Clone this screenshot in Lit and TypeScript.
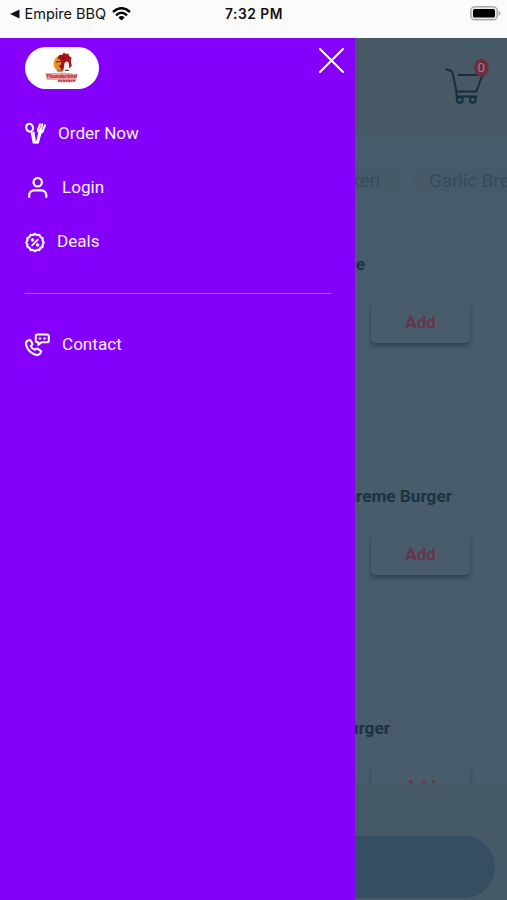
import { LitElement, html, css, svg } from "lit";
import { customElement, property } from "lit/decorators.js";

const icons = {
  order: svg`<g fill="none" stroke="#fff" stroke-linecap="round" stroke-linejoin="round">
    <ellipse cx="4.6" cy="4.7" rx="3.4" ry="3.9" stroke-width="2.1" transform="rotate(-20 4.6 4.7)"/>
    <path d="M6.4 8.8L8.6 19.8M8.6 9.4L10.2 19.8" stroke-width="1.8"/>
    <path d="M14.9 1.2L13.3 6.2M17.3 1.3L15.8 6.8M20 2.3L18.2 7" stroke-width="2"/>
    <path d="M13 6Q12.5 9.2 14.4 9.6L11.7 19.8M18.4 7Q17.6 9.8 15.7 9.8L13 19.8" stroke-width="1.8"/>
    <path d="M13.5 6.5L17.8 7.6L15 9.3Z" fill="#fff"/></g>`,
  login: svg`<g fill="none" stroke="#fff" stroke-width="2.2" stroke-linecap="round">
    <circle cx="9.7" cy="5.2" r="4.2"/><path d="M1.2 20v-1.8a4.9 4.9 0 0 1 4.9-4.9h7.3a4.9 4.9 0 0 1 4.9 4.9V20"/></g>`,
  deals: svg`<g fill="none" stroke="#fff" stroke-linecap="round" stroke-linejoin="round" transform="translate(0 1.5)">
    <path stroke-width="2.2" d="M10 1.2Q11.7 3 14.3 2.3Q15 4.9 17.6 5.6Q17 8.3 18.8 10Q17 11.8 17.6 14.4Q15 15 14.3 17.6Q11.7 17 10 18.8Q8.3 17 5.7 17.6Q5 15 2.4 14.4Q3 11.8 1.2 10Q3 8.3 2.4 5.6Q5 4.9 5.7 2.3Q8.3 3 10 1.2Z"/>
    <path stroke-width="1.8" d="M12.9 7.2L7.1 12.8"/><circle cx="7.5" cy="7.5" r="1" stroke-width="1.5"/><circle cx="12.6" cy="12.6" r="1" stroke-width="1.5"/></g>`,
  contact: svg`<g fill="none" stroke="#fff" stroke-linecap="round" stroke-linejoin="round" transform="translate(0 .5)">
    <path stroke-width="2.1" d="M2.2 7.4L4.1 6.6Q5.2 6.2 5.8 7.3L7.3 9.9Q7.8 11 6.7 11.7L5.8 12.5Q6.7 15.2 10 16.3L11.1 15.4Q11.9 14.7 12.9 15.4L15.6 17.4Q16.6 18.2 15.8 19.2L14.5 20.6Q12.8 22.2 10 21.1Q3.3 18.4 1.2 11.7Q.4 8.8 2.2 7.4Z"/>
    <path stroke-width="2" d="M12 1.1h10.2q1.6 0 1.6 1.6v4.5q0 1.6-1.6 1.6h-5.6L13.3 11.4V8.8H12q-1.2 0-1.2-1.6V2.7q0-1.6 1.2-1.6Z"/>
    <path stroke-width="2.1" d="M14.6 5h.6M19.3 5h.6"/></g>`,
};

const entries = [
  { label: "Order Now", icon: icons.order, w: 21, h: 21, gap: 12 },
  { label: "Login", icon: icons.login, w: 20, h: 21, gap: 14.5, indent: 2.5 },
  { label: "Deals", icon: icons.deals, w: 20, h: 20, gap: 12 },
];
const contact = { label: "Contact", icon: icons.contact, w: 25, h: 23, gap: 12 };

@customElement("status-bar")
export class StatusBar extends LitElement {
  static styles = css`
    :host { display: grid; grid-template-columns: 1fr auto 1fr; align-items: center; height: 38px; padding: 0 6px 10px 7px; box-sizing: border-box; background: #fbfbfb; color: #111; font: 14.5px Inter, sans-serif; }
    .back { display: flex; align-items: center; margin: -1px 0 0 2.5px; }
    .arrow { margin-right: 5px; }
    .wifi { margin: 0 0 0 6px; }
    .time { font-weight: 600; font-size: 13.8px; letter-spacing: 0.5px; }
    .battery { justify-self: end; margin-top: -1px; }
  `;
  render() {
    return html`
      <div class="back">
        <svg class="arrow" width="10" height="10" viewBox="0 0 10 10"><path d="M0 5L9.5 .6V9.4Z" fill="#111"/></svg>
        <span>Empire BBQ</span>
        <svg class="wifi" width="19" height="14" viewBox="0 0 19 14"><g fill="none" stroke="#080808" stroke-width="2.5"><path d="M1 5Q9.5-2.6 18 5"/><path d="M4 8.3Q9.5 3.3 15 8.3"/></g><path d="M6.4 10.4Q9.5 7.7 12.6 10.4L9.5 13.6Z"/></svg>
      </div>
      <div class="time">7:32 PM</div>
      <svg class="battery" width="31" height="15" viewBox="0 0 31 15"><rect x=".8" y=".8" width="26.4" height="13" rx="4" fill="#ececec" stroke="#aaa" stroke-width="1.5"/><rect x="3" y="3" width="22" height="8.6" rx="1.7"/><path d="M28.5 5Q30.5 5.7 30.5 7.4Q30.5 9 28.5 9.8Z" fill="#aaa"/></svg>`;
  }
}

@customElement("menu-entry")
export class MenuEntry extends LitElement {
  @property({ attribute: false }) entry: any = contact;
  static styles = css`
    :host { display: flex; align-items: center; height: 54px; color: #f8eeff; font: 17.1px Roboto, sans-serif; }
    svg { display: block; flex: none; overflow: visible; }
  `;
  render() {
    const e = this.entry;
    return html`<svg width=${e.w} height=${e.h} viewBox="0 0 ${e.w} ${e.h}" style="margin-left:${e.indent ?? 0}px;margin-right:${e.gap}px">${e.icon}</svg><span>${e.label}</span>`;
  }
}

@customElement("side-drawer")
export class SideDrawer extends LitElement {
  static styles = css`
    :host { display: block; box-sizing: border-box; padding: 9px 10px 0 25px; background: #8500fb; }
    .top { display: flex; justify-content: space-between; height: 59px; }
    .logo { display: flex; align-items: center; justify-content: center; width: 74px; height: 42px; border-radius: 21px; background: #fff; }
    .rule { height: 1px; margin: 25px 14px 23px 0; background: #b55cff; }
    svg { display: block; }
  `;
  render() {
    return html`
      <div class="top">
        <div class="logo">
          <svg width="34" height="32" viewBox="0 0 34 32">
            <circle cx="16.6" cy="11.5" r="8" fill="#f28a20"/>
            <path d="M13 5Q14 2 17 3L19 .5L21 2L23.5 1.5L24 4L26.5 5.5L25.8 9L26.8 14L23.5 17L23 10L20 10L19 16L17 19L15 15L16.5 10L12 11Z" fill="#a9141b"/>
            <path d="M19.5 11Q23.5 7 24 13L24.4 19H18.5Z" fill="#fff5ed"/>
            <path d="M10 8L15 7L15.5 11L11 12Z" fill="#e59a32"/>
            <path d="M11 10L15 9.5M14 14L17 15M17 6L20 6" stroke="#501014" stroke-width="1.2"/>
            <path d="M12 18.8H17M20 18.4H24" stroke="#555" stroke-width="1.3"/>
            <path d="M0 21.5L8 21L17 20.5L32 22L31 29L25 30.5H14L12 28L2 28Z" fill="#eda5a2"/>
            <text x="1" y="26.2" font-family="Roboto, sans-serif" font-size="5.6" font-weight="900" font-style="italic" textLength="31" lengthAdjust="spacingAndGlyphs" fill="#b92b30">Thunderbird</text>
            <path d="M13 28.7H30.5" stroke="#b0484a" stroke-width="2" stroke-dasharray="2 .5"/>
          </svg>
        </div>
        <svg width="27" height="27" viewBox="0 0 27 27"><path d="M2 2L25 25M25 2L2 25" stroke="#fff" stroke-width="2" stroke-linecap="round"/></svg>
      </div>
      <nav>
        ${entries.map((e) => html`<menu-entry .entry=${e}></menu-entry>`)}
        <div class="rule"></div>
        <menu-entry .entry=${contact}></menu-entry>
      </nav>`;
  }
}

@customElement("order-page")
export class OrderPage extends LitElement {
  static styles = css`
    :host { display: flex; flex-direction: column; height: 862px; background: #495c6b; font-family: Roboto, sans-serif; overflow: hidden; }
    header { height: 98px; flex: none; box-sizing: border-box; padding: 20px 15px 0; background: #465965; display: flex; justify-content: flex-end; }
    .chips { display: flex; gap: 10px; flex: none; margin: 28px 0 0 290px; font-size: 18.7px; color: #364b5b; white-space: nowrap; }
    .chip { box-sizing: border-box; height: 34px; line-height: 34px; border-radius: 17px; padding: 0 17px; background: #475a67; }
    .chip.first { flex: none; width: 112px; text-align: right; padding-right: 22px; }
    .items { flex: 1; min-height: 0; overflow: hidden; padding-top: 56px; }
    .item { height: 232px; }
    .title { height: 20px; line-height: 20px; font-size: 17.2px; font-weight: 700; color: #1a3344; margin-left: 266px; text-align: right; }
    .title.a { width: 99px; }
    .title.b { width: 186px; }
    .title.c { width: 124px; }
    .add { margin: 28px 0 0 371px; width: 99px; height: 41px; line-height: 41px; text-align: center; border-radius: 5px; background: #495c6b; box-shadow: 0 3px 4px rgba(25, 43, 58, 0.55); color: #67344c; font-size: 17px; font-weight: 700; }
    footer { flex: none; height: 117px; box-sizing: border-box; padding: 53px 12px 2px; background: #465966; }
    .pill { height: 62px; border-radius: 31px; background: #364e62; }
  `;
  render() {
    return html`
      <header>
        <svg width="48" height="48" viewBox="0 0 48 48">
          <g fill="none" stroke="#162e3f" stroke-width="2" stroke-linecap="round" stroke-linejoin="round">
            <path d="M2.5 11.5L6 12.5Q8.7 13.3 9 17L12.5 33.5V39M14.5 17H38.3L32.5 33.5H12.5M12.8 38.5H32.5"/>
            <circle cx="15.8" cy="41.8" r="2.9"/><circle cx="28.8" cy="41.8" r="2.9"/>
          </g>
          <ellipse cx="37.3" cy="9.8" rx="7.2" ry="8.8" fill="#6e2c3c"/>
          <text x="37.3" y="14" text-anchor="middle" font-family="Roboto, sans-serif" font-size="13.5" fill="#8f8591">0</text>
        </svg>
      </header>
      <div class="chips"><div class="chip first">Chicken</div><div class="chip">Garlic Bread</div></div>
      <div class="items">
        <div class="item"><div class="title a">e</div><div class="add">Add</div></div>
        <div class="item"><div class="title b">Supreme Burger</div><div class="add">Add</div></div>
        <div class="item"><div class="title c">Burger</div><div class="add">Add</div></div>
      </div>
      <footer><div class="pill"></div></footer>`;
  }
}

@customElement("app-root")
export class AppRoot extends LitElement {
  static styles = css`
    :host { display: block; width: 507px; height: 900px; overflow: hidden; }
    .stage { position: relative; height: 862px; }
    side-drawer { position: absolute; left: 0; top: 0; bottom: 0; width: 355px; }
  `;
  render() {
    return html`<status-bar></status-bar><div class="stage"><order-page></order-page><side-drawer></side-drawer></div>`;
  }
}
